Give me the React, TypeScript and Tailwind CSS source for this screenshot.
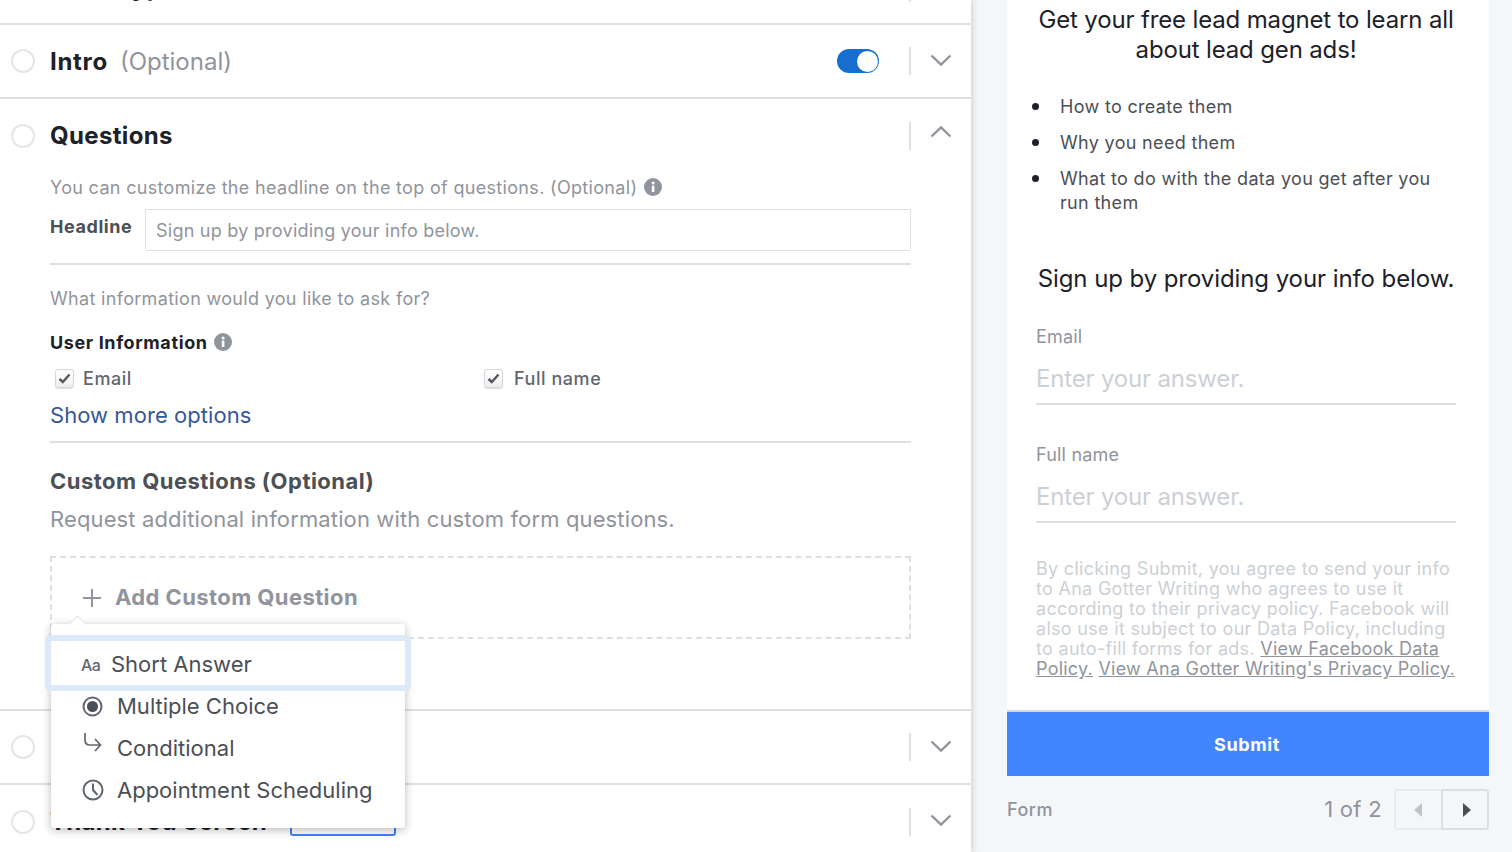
import React from 'react';

const Circle = () => <span className="w-6 h-6 shrink-0 rounded-full border-2 border-[#e3e5e9] bg-white" />;

const Chevron = ({ up = false }: { up?: boolean }) => (
    <svg width="22" height="14" viewBox="0 0 22 14" fill="none" stroke="#90949c" strokeWidth="2.4" className={up ? 'rotate-180' : ''}>
        <path d="M1.500 2.500 11 11.500 20.500 2.500" />
    </svg>
);

const Info = () => (
    <svg width="18" height="18" viewBox="0 0 18 18" className="shrink-0">
        <circle cx="9" cy="9" r="9" fill="#90949c" />
        <rect x="7.800" y="7.600" width="2.600" height="6.400" fill="#fff" />
        <circle cx="9.100" cy="5" r="1.500" fill="#fff" />
    </svg>
);

const Check = () => (
    <span className="w-[19px] h-[19px] flex items-center justify-center rounded-[3px] border border-[#d5d7db] bg-gradient-to-b from-white to-[#eeeff1] shadow-[0_1px_1px_rgba(0,0,0,0.12)]">
        <svg width="13" height="11" viewBox="0 0 13 11" fill="none" stroke="#55585e" strokeWidth="2.4">
            <path d="M1.500 6 4.800 9 11.500 1.500" />
        </svg>
    </span>
);

const RowControls = ({ lift = '', up = false }: { lift?: string; up?: boolean }) => (
    <div className="flex items-center ml-auto">
        <span className="w-[2px] h-7 bg-[#dddfe2]" />
        <span className={`w-[60px] flex justify-center ${lift}`}>
            <Chevron up={up} />
        </span>
    </div>
);

const MenuItem = ({ icon, label, first = false }: { icon: React.ReactNode; label: string; first?: boolean }) => (
    <div className={`flex items-center text-[22px] text-[#4b4f56] ${first ? 'h-[44px] pt-[3px] pl-[30px]' : 'h-[42px] pl-[31px]'}`}>
        <span className={`${first ? 'w-[30px]' : 'w-[35px]'} shrink-0 flex`}>{icon}</span>
        {label}
    </div>
);

const Bullet = () => (
    <span className="w-6 shrink-0 flex pt-[8px] ml-[-4px] mr-[4px]">
        <span className="w-[7px] h-[7px] rounded-full bg-[#1d2129]" />
    </span>
);

const App: React.FC = () => {
    return (
        <div className="h-[852px] w-[1512px] overflow-hidden flex bg-[#f5f6f8] font-['Inter',sans-serif]">
            {/* left column */}
            <div className="w-[971px] h-full shrink-0 bg-white shadow-[2px_0_6px_rgba(0,0,0,0.14)] z-10 flex flex-col">
                <div className="h-[25px] shrink-0 border-b-2 border-[#dddfe2] overflow-hidden relative">
                    <div className="mt-[-26px] ml-[50px] h-7 text-2xl font-bold text-[#1d2129] leading-7 tracking-[0.3px]">Form Type</div>
                    <span className="absolute left-[909px] top-0 w-[2px] h-[2px] bg-[#dddfe2]" />
                </div>

                <div className="h-[74px] shrink-0 border-b-2 border-[#dddfe2] flex items-center pl-[11px]">
                    <Circle />
                    <span className="ml-[15px] mt-[2px] text-[24px] font-bold tracking-[0.7px] text-[#1d2129]">Intro</span>
                    <span className="ml-[12px] mt-[2px] text-[24px] text-[#90949c]">(Optional)</span>
                    <div className="ml-auto flex items-center">
                        <span className="w-[42px] h-6 rounded-full bg-[#166fd0] flex items-center justify-end mr-[30px] pr-[1px]">
                            <span className="w-[21px] h-[21px] rounded-full bg-white" />
                        </span>
                        <span className="w-[2px] h-7 bg-[#dddfe2]" />
                        <span className="w-[60px] flex justify-center pb-[2px]"><Chevron /></span>
                    </div>
                </div>

                <div className="h-[612px] shrink-0 border-b-2 border-[#dddfe2]">
                    <div className="h-[74px] flex items-center pl-[11px]">
                        <Circle />
                        <span className="ml-[15px] text-[24px] font-bold tracking-[0.35px] text-[#1d2129]">Questions</span>
                        <RowControls up lift="pb-2" />
                    </div>
                    <div className="pl-[50px] pr-[60px] tracking-[0.32px]">
                        <div className="h-7 flex items-center gap-[7px] text-[18px] text-[#90949c]">
                            You can customize the headline on the top of questions. (Optional)
                            <Info />
                        </div>
                        <div className="flex mt-2">
                            <span className="w-[95px] shrink-0 h-[34px] flex items-center text-[18px] font-bold tracking-[0.57px] text-[#4b4f56]">Headline</span>
                            <div className="flex-1 h-[42px] border border-[#dddfe2] rounded-[2px] flex items-center pl-[10px] text-[18px] tracking-[0.24px] text-[#90949c]">
                                Sign up by providing your info below.
                            </div>
                        </div>
                        <div className="h-[2px] bg-[#dddfe2] mt-3" />
                        <div className="h-7 mt-[19px] flex items-center text-[18px] text-[#90949c]">What information would you like to ask for?</div>
                        <div className="h-7 mt-4 flex items-center gap-[6px] text-[18px] font-bold tracking-[0.62px] text-[#1d2129]">
                            User Information
                            <Info />
                        </div>
                        <div className="grid grid-cols-[429px_1fr] mt-[8px] pl-[5px] h-7 items-center text-[18px] font-medium tracking-[0.55px] text-[#616770]">
                            <div className="flex items-center gap-[9px]"><Check /> Email</div>
                            <div className="flex items-center gap-[11px]"><Check /> Full name</div>
                        </div>
                        <div className="h-8 mt-[7px] flex items-center text-[22px] tracking-[0.05px] text-[#365899]">Show more options</div>
                        <div className="h-[2px] bg-[#dddfe2] mt-[10px]" />
                        <div className="h-8 mt-[22px] flex items-center text-[22px] font-bold tracking-[0.47px] text-[#4b4f56]">Custom Questions (Optional)</div>
                        <div className="h-8 mt-[6px] flex items-center text-[22px] tracking-[0.13px] text-[#90949c]">Request additional information with custom form questions.</div>

                        <div className="relative h-[83px] mt-[21px] border-2 border-dashed border-[#dddfe2] flex items-center pl-[30px] gap-[13px] text-[22px] font-bold tracking-[0.41px] text-[#90949c]">
                            <svg width="20" height="20" viewBox="0 0 20 20" stroke="#90949c" strokeWidth="2">
                                <path d="M10 1v18M1 10h18" />
                            </svg>
                            Add Custom Question

                            {/* popover */}
                            <div className="absolute left-[-1px] top-[66px] w-[354px] h-[204px] bg-white rounded-[3px] shadow-[0_2px_10px_rgba(0,0,0,0.28)] z-20 font-normal tracking-normal">
                                <span className="absolute left-[20px] top-[-6px] w-[13px] h-[13px] rotate-45 bg-white border-l border-t border-[#e4e5e8]" />
                                <div className="relative mt-[11px] mx-[-6px] border-[6px] border-[#dde8f9] rounded-[5px] bg-white">
                                    <MenuItem
                                        first
                                        label="Short Answer"
                                        icon={<span className="text-[16px] font-medium tracking-[-0.5px] text-[#616770]">Aa</span>}
                                    />
                                </div>
                                <div className="mt-[-6px] relative">
                                    <MenuItem
                                        label="Multiple Choice"
                                        icon={
                                            <svg width="21" height="21" viewBox="0 0 21 21" fill="none">
                                                <circle cx="10.500" cy="10.500" r="9" stroke="#616770" strokeWidth="2" />
                                                <circle cx="10.500" cy="10.500" r="5.500" fill="#4b4f56" />
                                            </svg>
                                        }
                                    />
                                    <MenuItem
                                        label="Conditional"
                                        icon={
                                            <svg width="20" height="24" viewBox="0 0 20 24" fill="none" stroke="#616770" strokeWidth="1.700" className="mb-[8px]">
                                                <path d="M3 1v7c0 3 2 5 5 5h10M13 7l5.500 6-5.500 6" />
                                            </svg>
                                        }
                                    />
                                    <MenuItem
                                        label="Appointment Scheduling"
                                        icon={
                                            <svg width="22" height="22" viewBox="0 0 22 22" fill="none" stroke="#616770" strokeWidth="2">
                                                <circle cx="11" cy="11" r="9.500" />
                                                <path d="M11 4.500V11l4.500 5" />
                                            </svg>
                                        }
                                    />
                                </div>
                            </div>
                        </div>
                    </div>
                </div>

                <div className="h-[74px] shrink-0 border-b-2 border-[#dddfe2] flex items-center pl-[11px]">
                    <Circle />
                    <RowControls lift="pb-[2px]" />
                </div>
                <div className="h-[74px] shrink-0 flex items-center pl-[11px]">
                    <Circle />
                    <span className="ml-[15px] text-[24px] font-bold tracking-[0.3px] text-[#1d2129]">Thank You Screen</span>
                    <span className="ml-[23px] w-[106px] h-7 flex items-center justify-center rounded-[3px] border-2 border-[#4080ff] text-[16px] font-bold text-[#4080ff]">UPDATED</span>
                    <RowControls lift="pb-1" />
                </div>
            </div>

            {/* right column */}
            <div className="flex-1 pl-[36px] pr-[23px]">
                <div className="h-[710px] bg-white pl-[29px] pr-[33px]">
                    <div className="pt-[5px] text-center text-[24px] leading-[30px] tracking-[-0.15px] text-[#1d2129] whitespace-nowrap">
                        Get your free lead magnet to learn all<br />about lead gen ads!
                    </div>
                    <ul className="mt-[30px] text-[18px] leading-6 tracking-[0.32px] text-[#4b4f56]">
                        <li className="flex"><Bullet />How to create them</li>
                        <li className="flex mt-3"><Bullet />Why you need them</li>
                        <li className="flex mt-3"><Bullet /><span>What to do with the data you get after you<br />run them</span></li>
                    </ul>
                    <div className="mt-[47px] h-[34px] flex items-center justify-center text-[24px] tracking-[-0.08px] text-[#1d2129] whitespace-nowrap">
                        Sign up by providing your info below.
                    </div>
                    <div className="mt-[28px] h-6 flex items-center text-[18px] tracking-[0.2px] text-[#90949c]">Email</div>
                    <div className="mt-[12px] h-[45px] flex items-center pb-[5px] border-b-2 border-[#dddfe2] text-[24px] tracking-[-0.17px] text-[#ccd0d5]">Enter your answer.</div>
                    <div className="mt-[37px] h-6 flex items-center text-[18px] tracking-[0.2px] text-[#90949c]">Full name</div>
                    <div className="mt-[12px] h-[45px] flex items-center pb-[5px] border-b-2 border-[#dddfe2] text-[24px] tracking-[-0.17px] text-[#ccd0d5]">Enter your answer.</div>
                    <p className="mt-[36px] text-[18px] leading-5 tracking-[0.3px] text-[#ccd0d5] whitespace-nowrap">
                        By clicking Submit, you agree to send your info<br />
                        to Ana Gotter Writing who agrees to use it<br />
                        according to their privacy policy. Facebook will<br />
                        also use it subject to our Data Policy, including<br />
                        to auto-fill forms for ads. <span className="text-[#90949c] underline tracking-[0.24px]">View Facebook Data<br />Policy.</span> <span className="text-[#90949c] underline tracking-[0.24px]">View Ana Gotter Writing's Privacy Policy.</span>
                    </p>
                </div>
                <div className="h-[66px] border-t-2 border-[#d5d7da] bg-[#4385fd] flex items-center justify-center pr-[2px] text-[18px] font-bold tracking-[0.6px] text-white">Submit</div>
                <div className="mt-[13px] flex items-center">
                    <span className="text-[18px] font-medium tracking-[0.5px] text-[#90949c]">Form</span>
                    <span className="ml-auto mr-[12px] text-[22px] tracking-[0.3px] text-[#90949c]">1 of 2</span>
                    <div className="flex w-[95px] h-[41px]">
                        <span className="w-[47px] flex items-center justify-center rounded-l-[3px] border-2 border-r-0 border-[#e9ebee]">
                            <svg width="9" height="14" viewBox="0 0 9 14"><path d="M8 0v14L0 7z" fill="#bec2c9" /></svg>
                        </span>
                        <span className="w-[48px] flex items-center justify-center pl-[2px] rounded-r-[3px] border-2 border-[#dddfe2]">
                            <svg width="9" height="14" viewBox="0 0 9 14"><path d="M1 0v14l8-7z" fill="#4b4f56" /></svg>
                        </span>
                    </div>
                </div>
            </div>
        </div>
    );
};

export default App;
